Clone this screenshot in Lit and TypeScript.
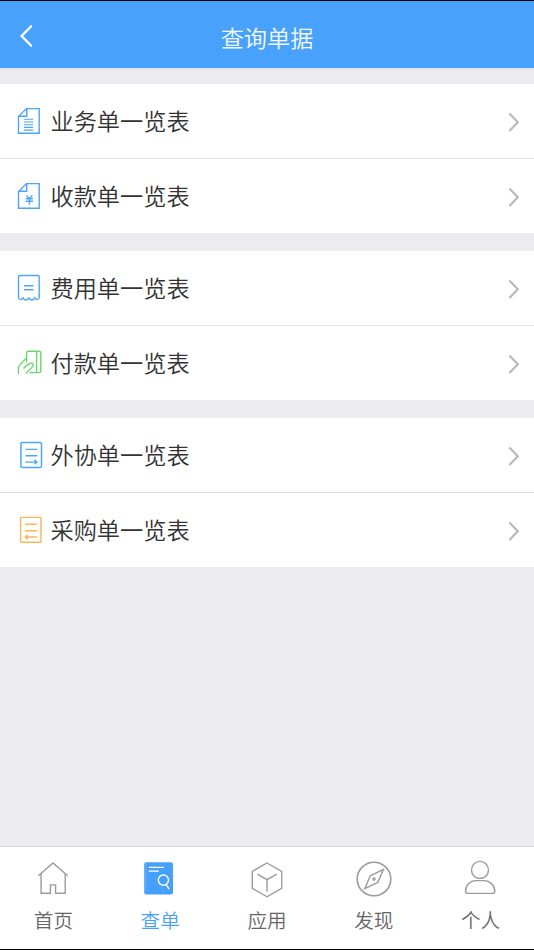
import { LitElement, html, svg, css } from "lit";
import { customElement } from "lit/decorators.js";
import { classMap } from "lit/directives/class-map.js";

const sheet = svg`<path d="M12.4 3.6H25.2V28.2H4.5V11.6Z"/><path d="M12.7 3.8V11.3H4.8"/>`;

const rowIcons: Record<string, unknown> = {
  business: svg`${sheet}<path d="M9.8 14.3h9.4M9.8 17h9.4M9.8 19.7h9.4M9.8 22.4h9.4M9.8 25.1h9.4" stroke-width="1.1"/>`,
  receipt: svg`${sheet}<path d="M12.5 15.4l2.9 3.4 2.9-3.4M11.8 18.7h7.2M11.8 21.3h7.2M15.4 18.8v6" stroke-width="1.4"/>`,
  expense: svg`<path d="M6 3.5H23.7Q25.2 3.5 25.2 5V25.3Q25.2 27.4 23.4 27.6Q21.9 27.6 20.8 25.8Q19.8 28 18 28Q16.2 28 14.9 25.8Q13.6 28 11.8 28Q10 28 9 25.8Q7.9 27.6 6.3 27.6Q4.5 27.4 4.5 25.3V5Q4.5 3.5 6 3.5Z"/><path d="M10 13.7h9.4M10 17.7h9.4"/>`,
  payment: svg`<path d="M12.6 15.4V6Q12.6 4.2 14.4 4.2H25Q26.8 4.2 26.8 6V23.8Q26.8 25.6 25 25.6H15.6M22.6 4.4V25.4"/><path d="M4.5 27.3V20.5C4.5 18.2 8.2 15.6 12.4 11.3M9.5 21.4C11.7 19.1 14.2 16.8 17 16.3C19.2 16.1 19.8 17.8 18.7 19.4L12 26.6"/>`,
  outsource: svg`<rect x="6.9" y="3.6" width="20.6" height="24.8" rx="1.3" stroke-width="1.5"/><path d="M11.4 10.4h11.8M11.4 16.8h11.8M11.4 23.1h11M20.4 20.9l2.5 2.2-2.5 2.2"/>`,
  purchase: svg`<rect x="6.6" y="3.4" width="20.4" height="24.9" rx=".8"/><path d="M11 10.3h11.8M11 16.7h11.8M11.6 23h11.4M13.8 20.9l-2.5 2.1 2.5 2.1"/>`,
};

const tabIcons: Record<string, unknown> = {
  home: svg`<path d="M5.3 15.8L20 3 34.7 15.8M8.1 13.7V33.2H17.4V24.9H22.6V33.2H32.2V13.7"/>`,
  query: svg`<rect x="4.2" y="2.2" width="28.8" height="32.2" rx="2" fill="#46a0fb" stroke="none"/><path d="M6.2 3v30.4" stroke="#7dbcfc" stroke-width=".5"/><g stroke="#fff" stroke-width="1.4"><path d="M8.8 7.4h15M8.8 11.1h10"/><circle cx="23.4" cy="20.1" r="5.1"/><path d="M26.2 24.4l2.8 4.8"/></g>`,
  apps: svg`<path d="M20 3L34.7 11.3V28.3L20 36.8 5.3 28.3V11.3Z"/><path d="M10.4 14.2L20 19.7 29.8 14.2M20 19.7V31.4"/>`,
  discover: svg`<circle cx="20" cy="19" r="16.8" stroke-width="1.6"/><path d="M29.4 9.4L23.8 22.4 10.8 28.6 16.3 15.8Z"/><circle cx="20" cy="19.1" r="1.1"/>`,
  me: svg`<circle cx="19" cy="9.9" r="8.5"/><path d="M15 20.6H23C29.3 20.6 33.8 25.6 33.8 31.3Q33.8 33.4 31.6 33.4H6.6Q4.5 33.4 4.5 31.3C4.5 25.6 8.8 20.6 15 20.6Z"/>`,
};

const groups = [
  [
    { icon: "business", tone: "blue", label: "业务单一览表" },
    { icon: "receipt", tone: "blue", label: "收款单一览表" },
  ],
  [
    { icon: "expense", tone: "blue", label: "费用单一览表" },
    { icon: "payment", tone: "green", label: "付款单一览表" },
  ],
  [
    { icon: "outsource", tone: "blue", label: "外协单一览表" },
    { icon: "purchase", tone: "orange", label: "采购单一览表" },
  ],
];

const tabs = [
  { icon: "home", label: "首页" },
  { icon: "query", label: "查单", active: true },
  { icon: "apps", label: "应用" },
  { icon: "discover", label: "发现" },
  { icon: "me", label: "个人" },
];

@customElement("app-root")
export class AppRoot extends LitElement {
  static styles = css`
    :host {
      display: flex;
      flex-direction: column;
      box-sizing: border-box;
      height: 100vh;
      border-top: 1px solid #000;
      border-bottom: 1px solid #000;
      background: #ebebf0;
      color: #333;
      font-family: "Noto Sans CJK SC", sans-serif;
      font-weight: 350;
      overflow: hidden;
    }
    svg {
      display: block;
      flex: none;
      fill: none;
      stroke: currentColor;
      stroke-width: 1.4;
    }
    .header {
      display: grid;
      grid-template-columns: 60px 1fr 60px;
      align-items: center;
      height: 67px;
      flex: none;
      background: #48a1fa;
      color: #fff;
      box-shadow: 0 1px 3px rgba(0, 0, 0, 0.06);
    }
    .back {
      margin: 3px 0 0 16px;
      stroke-width: 2.3;
    }
    .title {
      margin: 4px 0 0;
      text-align: center;
      font-size: 23.2px;
      line-height: 34px;
      font-weight: 350;
      color: #f4f9ff;
    }
    .list {
      flex: 1;
      display: flex;
      flex-direction: column;
      gap: 18px;
      padding-top: 16px;
    }
    .group {
      background: #fff;
    }
    .row {
      display: flex;
      align-items: center;
      height: 74px;
      padding: 0 12px 0 14px;
    }
    .row + .row {
      border-top: 1px solid #e2e2e4;
    }
    .blue { color: #4da5fb; }
    .green { color: #6cd671; }
    .orange { color: #fcb656; }
    .label {
      flex: 1;
      margin: 0 0 2px 4.5px;
      font-size: 23.2px;
      line-height: 34px;
    }
    .chevron {
      margin-top: 2px;
      color: #b9b9b9;
      stroke-width: 2.2;
    }
    .tabs {
      display: grid;
      grid-template-columns: repeat(5, 1fr);
      height: 102px;
      flex: none;
      border-top: 1px solid #d8d8dc;
      background: #fff;
    }
    .tab {
      display: flex;
      flex-direction: column;
      align-items: center;
      padding-top: 13px;
      color: #666;
      font-size: 19.6px;
      line-height: 28px;
    }
    .tab svg {
      color: #9b9b9b;
      margin-bottom: 6px;
    }
    .active {
      color: #48a1fa;
    }
  `;

  render() {
    return html`
      <header class="header">
        <svg class="back" width="20" height="26" viewBox="0 0 20 26">
          <path d="M15.2 3.2L5.6 13 15.2 22.8" stroke-linecap="round" />
        </svg>
        <h1 class="title">查询单据</h1>
      </header>
      <main class="list">
        ${groups.map(
          (rows) => html`<section class="group">
            ${rows.map(
              (row) => html`<div class="row">
                <svg class=${row.tone} width="32" height="32" viewBox="0 0 32 32">${rowIcons[row.icon]}</svg>
                <span class="label">${row.label}</span>
                <svg class="chevron" width="16" height="24" viewBox="0 0 16 24">
                  <path d="M3.4 3.5L11.8 12.3 3.4 21.1" />
                </svg>
              </div>`
            )}
          </section>`
        )}
      </main>
      <nav class="tabs">
        ${tabs.map(
          (tab) => html`<div class=${classMap({ tab: true, active: !!tab.active })}>
            <svg width="40" height="40" viewBox="0 0 40 40">${tabIcons[tab.icon]}</svg>
            <span>${tab.label}</span>
          </div>`
        )}
      </nav>
    `;
  }
}
